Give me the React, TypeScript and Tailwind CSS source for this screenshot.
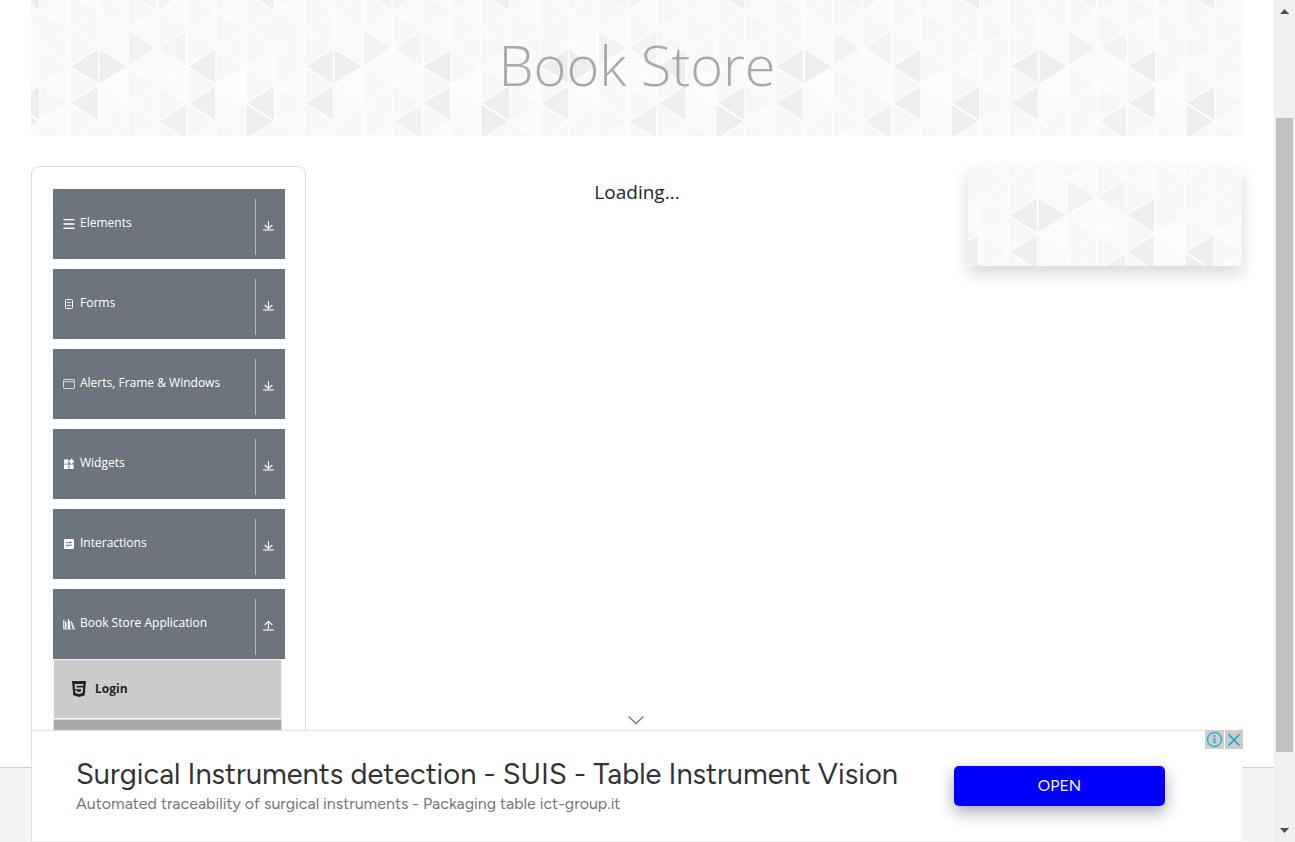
import { useId } from "react";
import type { ReactNode } from "react";
import { SiHtml5 } from "react-icons/si";

const COL = 29.375;
const HALF = 18.375;

type Side = "l" | "r";

// key: column, apex row (in half-row steps), pointing direction
const SHADES: Record<string, string> = {
  "7:0:l": "#eeeeee",
  "3:0:l": "#f5f5f5",
  "4:0:r": "#f4f4f4",
  "1:4:l": "#eeeeee",
  "2:4:r": "#eeeeee",
  "3:3:r": "#f3f3f3",
  "4:3:l": "#f4f4f4",
  "5:4:l": "#eeeeee",
  "1:6:l": "#efefef",
  "5:6:l": "#efefef",
  "7:6:l": "#eeeeee",
  "7:7:r": "#eeeeee",
  "4:7:l": "#f1f1f1",
  "2:2:r": "#fbfbfb",
  "4:4:r": "#fbfbfb",
  "6:6:r": "#fbfbfb",
  "2:6:r": "#fafafa",
  "2:5:l": "#fcfcfc",
  "6:5:l": "#fcfcfc",
  "4:5:l": "#fbfbfb",
};

function shade(col: number, row: number, side: Side) {
  return SHADES[`${col}:${row}:${side}`] ?? (side === "r" ? "#f8f8f8" : (col + row) % 3 ? "#fafafa" : "#f9f9f9");
}

const TRIANGLES = Array.from({ length: 8 }, (_, col) =>
  Array.from({ length: 17 }, (_, row) => {
    const side: Side = (col + row) % 2 === 0 ? "r" : "l";
    const y = row * HALF;
    const left = col * COL;
    const right = left + COL;
    const apexX = side === "r" ? right : left;
    const baseX = side === "r" ? left : right;
    return {
      key: `${col}:${row}:${side}`,
      fill: shade(col, row, side),
      points: `${apexX},${y} ${baseX},${y - HALF} ${baseX},${y + HALF}`,
    };
  }),
).flat();

function TriangleBackdrop({ x, y }: { x: number; y: number }) {
  const id = useId();
  return (
    <svg className="absolute inset-0 h-full w-full" aria-hidden="true">
      <defs>
        <pattern id={id} x={x} y={y} width={COL * 8} height={HALF * 16} patternUnits="userSpaceOnUse">
          {TRIANGLES.map((t) => (
            <polygon key={t.key} points={t.points} fill={t.fill} stroke="#fdfdfd" strokeWidth="1.8" strokeLinejoin="round" />
          ))}
        </pattern>
      </defs>
      <rect width="100%" height="100%" fill={`url(#${id})`} />
    </svg>
  );
}

function MenuIcon() {
  return (
    <svg width="12" height="12" viewBox="0 0 12 12" fill="#fff">
      <path d="M.5 1h11v1.300H.5zM.5 5.200h11v1.600H.5zM.5 9.600h11v1.300H.5z" />
    </svg>
  );
}

function FormIcon() {
  return (
    <svg width="12" height="12" viewBox="0 0 12 12" fill="none" stroke="#fff">
      <rect x="2.500" y="1.500" width="7" height="9" rx="1" />
      <path d="M4 4.500h4M4 7.500h4" strokeOpacity=".8" />
    </svg>
  );
}

function WindowIcon() {
  return (
    <svg width="12" height="12" viewBox="0 0 12 12" fill="none" stroke="#fff" strokeOpacity=".75">
      <rect x=".6" y="1.500" width="10.800" height="9" rx=".8" />
      <path d="M1 3.600h10" strokeWidth=".9" />
    </svg>
  );
}

function WidgetsIcon() {
  return (
    <svg width="12" height="12" viewBox="0 0 12 12" fill="#fff">
      <path d="M1 1.500h4.400v4.300H1zM1 6.600h4.400V11H1zM6.400 6.600h4.200V11H6.400zM8.500.6l2.900 2.800-2.900 2.800-2.800-2.800z" />
    </svg>
  );
}

function SwapIcon() {
  return (
    <svg width="12" height="12" viewBox="0 0 12 12">
      <rect x="1" y="1" width="10" height="10" rx=".8" fill="#fff" />
      <path d="M3 4.700h5.600L7.200 3.300M9 7.200H3.400l1.400 1.400" fill="none" stroke="#6c757d" strokeWidth="1" />
    </svg>
  );
}

function BooksIcon() {
  return (
    <svg width="12" height="12" viewBox="0 0 12 12" fill="none" stroke="#fff">
      <path d="M.8 2v9M2.600 3.500v7.500M5.400 1v10M6.600 3v8" strokeWidth="1.100" />
      <path d="M4 4v7" strokeOpacity=".6" />
      <path d="M8 3l2 8M9.400 5l2 6.300" strokeWidth=".9" />
      <path d="M0 11.200h12" strokeOpacity=".6" strokeWidth=".8" />
    </svg>
  );
}

function ArrowIcon({ up }: { up?: boolean }) {
  return (
    <svg width="12" height="12" viewBox="0 0 12 12" fill="none" stroke="#fff">
      <path d={up ? "M5.500 9V1.500M1.700 5l3.800-3.700L9.300 5" : "M5.500 1v7.500M1.700 5l3.800 3.700L9.300 5"} strokeWidth="1.100" />
      <path d="M0 10h11" strokeOpacity=".6" strokeWidth="1.800" />
    </svg>
  );
}

const GROUPS: { label: string; icon: ReactNode; open?: boolean }[] = [
  { label: "Elements", icon: <MenuIcon /> },
  { label: "Forms", icon: <FormIcon /> },
  { label: "Alerts, Frame & Windows", icon: <WindowIcon /> },
  { label: "Widgets", icon: <WidgetsIcon /> },
  { label: "Interactions", icon: <SwapIcon /> },
  { label: "Book Store Application", icon: <BooksIcon />, open: true },
];

function Sidebar() {
  return (
    <nav className="w-[275px] shrink-0 rounded-lg border border-[#dcdcdf] pt-[22px] pr-5 pl-[21px]">
      <ul className="flex flex-col gap-2.5">
        {GROUPS.map((g) => (
          <li key={g.label}>
            <button type="button" aria-expanded={!!g.open} className="flex h-[70px] w-full items-center bg-[#6c757d] pl-2.5 text-left text-xs text-white">
              {g.icon}
              <span className="flex-1 pb-0.5 pl-[5px]">{g.label}</span>
              <span className="mt-1.5 flex h-14 w-[30px] items-center border-l border-[#b4b8bc] pb-0.5 pl-[7px]">
                <ArrowIcon up={g.open} />
              </span>
            </button>
            {g.open && (
              <ul className="mr-[3px]">
                <li className="border border-[#f4f4f6] bg-[#cccccc]">
                  <a href="#login" className="flex h-[58px] items-center gap-2 pl-[17px] text-xs font-bold text-[#212529]">
                    <SiHtml5 size={16} />
                    Login
                  </a>
                </li>
                <li className="h-[60px] border border-[#dcdcdf] bg-[#a9a9a9]" />
              </ul>
            )}
          </li>
        ))}
      </ul>
    </nav>
  );
}

function AdBar() {
  return (
    <section aria-label="Advertisement" className="absolute right-8 bottom-0 left-[31px] flex h-28 items-center border-t border-b border-l border-[#e2e2e4] border-b-[#f0f0f0] bg-white pr-[77px] pl-11 font-['Figtree','Inter',sans-serif]">
      <button type="button" aria-label="Collapse" className="absolute -top-4 left-1/2 -translate-x-1/2">
        <svg width="18" height="12" viewBox="0 0 18 12" fill="none" stroke="#777" strokeWidth="1.300">
          <path d="M.5 1.500L8 8.500l7.500-7" />
        </svg>
      </button>
      <div className="flex-1">
        <h2 className="text-[29px] leading-9 whitespace-nowrap text-[#333]">Surgical Instruments detection - SUIS - Table Instrument Vision</h2>
        <p className="text-base leading-6 text-[#777]">Automated traceability of surgical instruments - Packaging table ict-group.it</p>
      </div>
      <button type="button" className="h-10 w-[211px] shrink-0 rounded-[5px] bg-[#0000ff] text-base text-white shadow-[0_6px_16px_rgba(60,64,80,0.45)]">OPEN</button>
      <div className="absolute -top-px -right-px flex gap-px">
        <button type="button" aria-label="Ad information" className="flex h-[19px] w-[19px] items-center justify-center bg-[#cfcfcf]">
          <svg width="17" height="17" viewBox="0 0 17 17" fill="none" stroke="#2fb3cc">
            <circle cx="8.500" cy="8.500" r="7" strokeWidth="1.500" />
            <path d="M8.500 4v2M8.500 7v5.500" strokeWidth="2" />
          </svg>
        </button>
        <button type="button" aria-label="Close ad" className="flex h-[19px] w-[18px] items-center justify-center bg-[#cbcbcb]">
          <svg width="14" height="14" viewBox="0 0 14 14" fill="none" stroke="#10aecb" strokeWidth="1.700">
            <path d="M1.500 1.500l11 11M12.500 1.500l-11 11" />
          </svg>
        </button>
      </div>
    </section>
  );
}

function ScrollRail() {
  return (
    <div aria-hidden="true" className="flex w-[21px] shrink-0 flex-col items-center bg-[#f0f0f0] py-[9px]">
      <svg width="9" height="5" viewBox="0 0 9 5" fill="#505050"><path d="M4.500 0L9 5H0z" /></svg>
      <div className="mt-[104px] mb-[76px] w-[17px] flex-1 bg-[#c1c1c1]" />
      <svg width="9" height="5" viewBox="0 0 9 5" fill="#505050"><path d="M4.500 5L0 0h9z" /></svg>
    </div>
  );
}

export default function App() {
  return (
    <div className="flex h-screen overflow-hidden bg-white font-['Open_Sans','Noto_Sans',sans-serif] text-[#212529]">
      <div className="relative flex min-w-0 flex-1 flex-col">
        <div className="flex min-h-0 flex-1 flex-col overflow-hidden px-[31px]">
          <header className="relative flex h-[136px] shrink-0 items-center justify-center">
            <TriangleBackdrop x={9} y={-7} />
            <h1 className="relative pb-2 text-[56px] leading-none font-light text-[#a9a9a9]">Book Store</h1>
          </header>
          <div className="mt-[30px] flex items-start justify-between">
            <Sidebar />
            <main className="flex-1 pt-3 text-center text-[19px] leading-7">Loading...</main>
            <aside aria-label="Sponsored" className="relative mr-px h-[100px] w-[274px] shrink-0 shadow-[0_8px_16px_rgba(0,0,0,0.15)]">
              <TriangleBackdrop x={11} y={-24} />
            </aside>
          </div>
        </div>
        <footer className="h-[75px] shrink-0 border-t border-[#cfcfcf] bg-[#f4f4f4]" />
        <AdBar />
      </div>
      <ScrollRail />
    </div>
  );
}
